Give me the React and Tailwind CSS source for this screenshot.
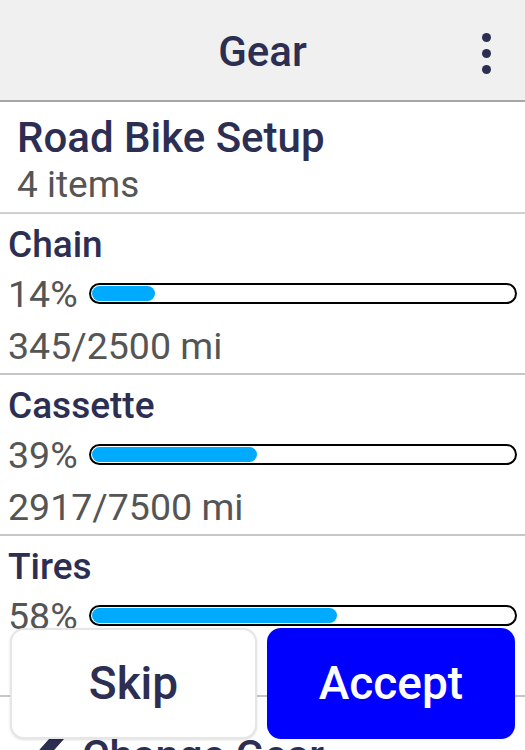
import React from "react";

const items = [
  { name: "Chain", pct: 14, used: 345, total: 2500 },
  { name: "Cassette", pct: 39, used: 2917, total: 7500 },
  { name: "Tires", pct: 58, used: 1740, total: 3000 },
];

const font = { fontFamily: "Roboto, 'Liberation Sans', sans-serif" };

const GearItem = ({ item }) => (
  <div className="border-b-2 border-[#c6c6c6] pl-2 pr-2 pt-[9px]">
    <div className="text-[37px] leading-[44px] font-medium text-[#2c2e52]">{item.name}</div>
    <div className="flex items-center h-[50px] pt-[3px]">
      <span className="text-[37.5px] leading-[44px] text-[#555555] w-[81px] shrink-0">
        {item.pct}%
      </span>
      <div className="flex-1 h-[21px] rounded-full border-2 border-black p-px">
        <div
          className="h-full rounded-full bg-[#00aaff]"
          style={{ width: `${Math.max(item.pct, 15)}%` }}
        />
      </div>
    </div>
    <div className="pt-[3px] text-[37.5px] leading-[53px] text-[#555555]">
      {item.used}/{item.total} mi
    </div>
  </div>
);

export default function App() {
  return (
    <div className="relative w-[525px] h-[750px] overflow-hidden bg-white" style={font}>
      {/* Header */}
      <div className="relative flex items-center justify-center h-[102px] bg-[#f0f0f0] border-b-2 border-[#a6a6a6]">
        <h1 className="pt-[3px] text-[42px] leading-[50px] font-medium text-[#2c2e52]">Gear</h1>
        <div className="absolute right-[34px] top-[33px] flex flex-col gap-[7px]">
          <span className="w-[9px] h-[9px] rounded-full bg-[#2c2e52]" />
          <span className="w-[9px] h-[9px] rounded-full bg-[#2c2e52]" />
          <span className="w-[9px] h-[9px] rounded-full bg-[#2c2e52]" />
        </div>
      </div>

      {/* Setup summary */}
      <div className="border-b-2 border-[#d0d0d0] pl-[17px] pt-[11px] pb-[5px]">
        <div className="text-[42px] leading-[50px] font-medium text-[#2c2e52]">Road Bike Setup</div>
        <div className="text-[37px] leading-[44px] text-[#555555]">4 items</div>
      </div>

      {items.map((item) => (
        <GearItem key={item.name} item={item} />
      ))}

      {/* Change gear row */}
      <div className="flex items-center gap-4 pl-[32px] pt-[34px]">
        <svg width="34" height="44" viewBox="0 0 34 44" className="shrink-0">
          <path d="M17 5 L32 5 L16 23 L32 41 L17 41 L1 23 Z" fill="#2c2e52" />
        </svg>
        <span className="text-[42px] leading-[50px] font-medium text-[#2c2e52]">Change Gear</span>
      </div>

      {/* Action buttons overlay */}
      <div className="absolute left-[10px] top-[628px] flex gap-[10px]">
        <button className="w-[247px] h-[111px] rounded-[14px] bg-white border-2 border-[#e6e6e6] shadow-sm text-[46px] font-medium text-[#2c2e52]">
          Skip
        </button>
        <button className="w-[248px] h-[111px] rounded-[14px] bg-[#0000ff] text-[46px] font-medium text-white">
          Accept
        </button>
      </div>
    </div>
  );
}
